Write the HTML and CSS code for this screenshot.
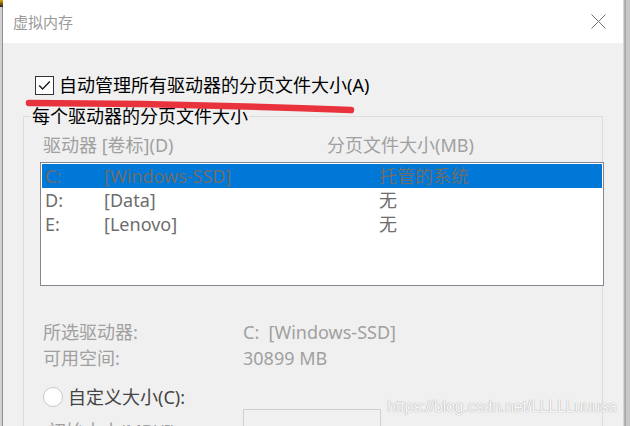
FILE: index.html
```html
<!DOCTYPE html>
<html lang="zh-CN">
<head>
<meta charset="utf-8">
<title>虚拟内存</title>
<link rel="stylesheet" href="styles.css">
</head>
<body>
<div class="screen">
  <div class="edge-left"><span class="corner"></span></div>
  <div class="dialog">
    <div class="titlebar">
      <span class="title">虚拟内存</span>
      <svg class="close" viewBox="0 0 15 15" width="15" height="15"><path d="M0.5 0.5 L14.5 14.5 M14.5 0.5 L0.5 14.5" stroke="#707070" stroke-width="1" fill="none"/></svg>
    </div>
    <div class="content">
      <div class="auto-row">
        <span class="checkbox"><svg viewBox="0 0 17 17" width="17" height="17"><path d="M3.2 8.6 L6.6 12 L13.8 4.6" stroke="#1a1a1a" stroke-width="1.4" fill="none"/></svg></span>
        <span class="auto-label">自动管理所有驱动器的分页文件大小(A)</span>
      </div>
      <fieldset class="group">
        <legend>每个驱动器的分页文件大小</legend>
        <div class="list-header"><span class="col-drive">驱动器 [卷标](D)</span><span>分页文件大小(MB)</span></div>
        <div class="listbox">
          <div class="row selected"><span class="c1">C:</span><span class="c2">[Windows-SSD]</span><span>托管的系统</span></div>
          <div class="row"><span class="c1">D:</span><span class="c2">[Data]</span><span>无</span></div>
          <div class="row"><span class="c1">E:</span><span class="c2">[Lenovo]</span><span>无</span></div>
        </div>
        <div class="info">
          <span>所选驱动器:</span><span class="pre">C:  [Windows-SSD]</span>
          <span>可用空间:</span><span>30899 MB</span>
        </div>
        <div class="radio-row"><span class="radio"></span><span class="radio-label">自定义大小(C):</span></div>
        <div class="size-row"><span class="size-label">初始大小(MB)(I):</span><span class="textbox"></span></div>
      </fieldset>
    </div>
  </div>
  <div class="edge-right"></div>
  <svg class="annot" viewBox="24 94 334 22" width="334" height="22"><path d="M29 103 Q 190 103.5 351 110" stroke="#e8333d" stroke-width="6.5" stroke-linecap="round" fill="none"/></svg>
  <div class="watermark">https://blog.csdn.net/LLLLLuuusa</div>
</div>
</body>
</html>
```
FILE: styles.css
```css
* { box-sizing: border-box; }
html, body { margin: 0; padding: 0; }
body {
  width: 630px;
  height: 426px;
  overflow: hidden;
  background: #f0f0f0;
  font-family: "Noto Sans", "Noto Sans CJK SC", sans-serif;
}
.screen {
  position: relative;
  display: flex;
  width: 630px;
  height: 426px;
  overflow: hidden;
}
.edge-left {
  position: relative;
  flex: none;
  width: 3px;
  background: #d2d2d2;
  border-right: 1px solid #8f8f8f;
}
.corner {
  position: absolute;
  left: 0;
  top: 0;
  width: 3px;
  height: 7px;
  background: linear-gradient(#e0a000, #222);
}
.dialog {
  flex: 1;
  min-width: 0;
  display: flex;
  flex-direction: column;
  background: #f0f0f0;
}
.titlebar {
  flex: none;
  height: 43px;
  background: #fff;
  display: flex;
  align-items: center;
  justify-content: space-between;
  padding: 0 17px 0 10px;
}
.title {
  font-size: 15px;
  line-height: 20px;
  color: #999;
}
.close { display: block; }
.edge-right {
  flex: none;
  width: 7px;
  background: linear-gradient(to right, #d6d6d6 0 1px, #b4b4b4 1px 2px, #a6a6a6 2px 3px, #c8c8c8 3px 7px);
}
.content {
  padding: 30px 20px 0 20px;
}
.auto-row {
  display: flex;
  align-items: center;
  gap: 5px;
  height: 24px;
  margin-left: 12px;
}
.checkbox {
  flex: none;
  width: 19px;
  height: 19px;
  border: 1px solid #333;
  background: #fff;
  display: flex;
}
.checkbox svg { display: block; }
.auto-label {
  font-size: 18px;
  line-height: 24px;
  color: #000;
  white-space: nowrap;
}
.group {
  margin: 9px 0 0 0;
  padding: 0 16px;
  border: 1px solid #dcdcdc;
  min-width: 0;
}
.group legend {
  font-size: 18px;
  line-height: 20px;
  color: #000;
  padding: 0 1px;
  margin-left: -9px;
}
.list-header {
  margin-top: 7px;
  padding-left: 3px;
  font-size: 18px;
  line-height: 24px;
  color: #a0a0a0;
  display: flex;
}
.col-drive { width: 284px; }
.listbox {
  margin-top: 5px;
  width: 564px;
  height: 124px;
  border: 1px solid #828790;
  background: #fff;
  padding: 1px;
}
.row {
  display: flex;
  height: 24px;
  line-height: 24px;
  font-size: 18px;
  color: #6d6d6d;
  padding-left: 3px;
}
.row.selected { background: #0078d7; }
.c1 { width: 59px; }
.c2 { width: 275px; }
.info {
  margin-top: 33px;
  padding-left: 3px;
  display: grid;
  grid-template-columns: 200px auto;
  font-size: 18px;
  line-height: 26px;
  color: #a0a0a0;
}
.pre { white-space: pre; }
.radio-row {
  margin-top: 14px;
  padding-left: 3px;
  height: 24px;
  display: flex;
  align-items: center;
  gap: 5px;
}
.radio {
  width: 20px;
  height: 20px;
  border: 1px solid #c8c8c8;
  border-radius: 50%;
  background: #fff;
}
.radio-label {
  font-size: 18px;
  line-height: 24px;
  color: #444;
}
.size-row {
  margin-top: 0;
  padding-left: 3px;
  display: flex;
  align-items: flex-start;
}
.size-label {
  width: 200px;
  padding: 9px 0 0 5px;
  font-size: 18px;
  line-height: 26px;
  color: #a0a0a0;
}
.textbox {
  width: 138px;
  height: 30px;
  border: 1px solid #cfcfcf;
  background: #f0f0f0;
}
.annot {
  position: absolute;
  left: 24px;
  top: 94px;
  pointer-events: none;
}
.watermark {
  position: absolute;
  right: 13px;
  top: 397px;
  font-family: "Liberation Sans", sans-serif;
  font-size: 15.6px;
  line-height: 20px;
  color: rgba(255, 255, 255, 0.95);
  text-shadow: 0 0 1px #a8a8a8, 0 0 1px #b8b8b8;
  pointer-events: none;
}
```
